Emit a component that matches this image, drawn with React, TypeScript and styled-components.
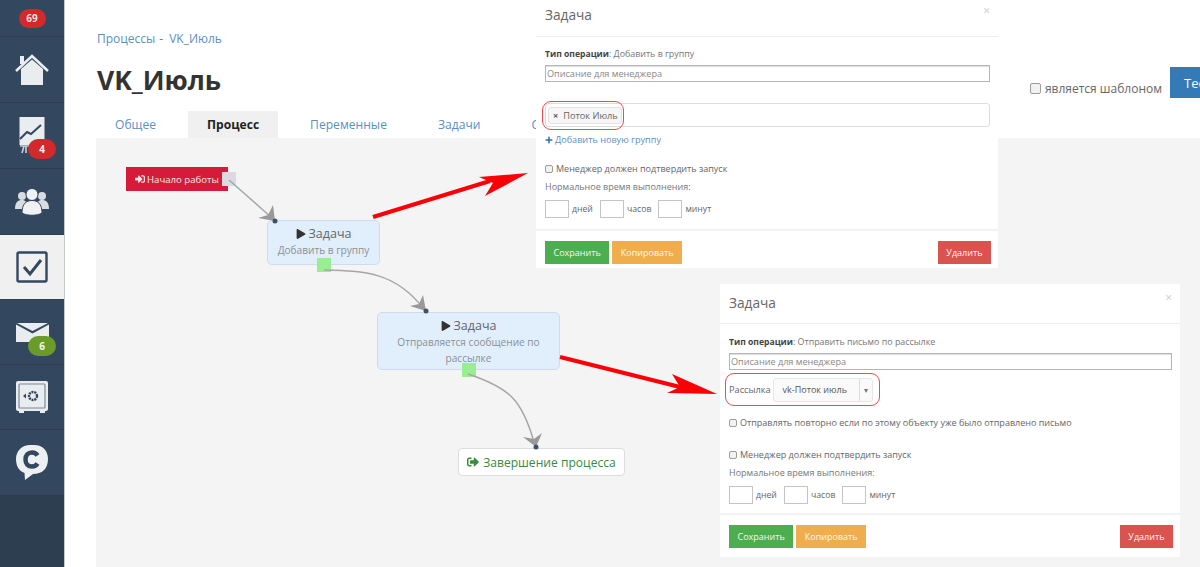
import React from 'react';
import styled, { createGlobalStyle } from 'styled-components';
import { FaSignInAlt, FaPlus, FaPlay, FaSignOutAlt } from 'react-icons/fa';

const GlobalStyle = createGlobalStyle`
  html, body {
    margin: 0;
    padding: 0;
    background: #fff;
    font-family: "Open Sans", "Liberation Sans", sans-serif;
    color: #666;
  }
  * {
    box-sizing: border-box;
  }
`;

const HomeIcon = () => (
  <svg width="34" height="32" viewBox="0 0 34 32">
    <rect x="5" y="2" width="4" height="8" fill="#e9edf0" />
    <path d="M1 17 L17 2 L33 17" fill="none" stroke="#e9edf0" strokeWidth="2.6" />
    <path d="M6 15 L17 5.5 L28 15 V31 H6 Z" fill="#e9edf0" />
  </svg>
);

const ChartIcon = () => (
  <svg width="26" height="37" viewBox="0 0 26 37">
    <rect x="0.5" y="0" width="25" height="28" fill="#e9edf0" />
    <path d="M1 22 L8 15 L12 17 L22 8" fill="none" stroke="#33475f" strokeWidth="2" />
    <path d="M1 29 H10 M5 29 L3 36 M7 29 V36" stroke="#c9d0d6" strokeWidth="1.6" fill="none" />
  </svg>
);

const UsersIcon = () => (
  <svg width="34" height="28" viewBox="0 0 34 28">
    <circle cx="7" cy="8" r="4" fill="#d8dde2" />
    <circle cx="27" cy="8" r="4" fill="#d8dde2" />
    <path d="M0 21 C0 14 3 12 7 12 C10 12 13 14 13 21 Z" fill="#d8dde2" />
    <path d="M21 21 C21 14 24 12 27 12 C31 12 34 14 34 21 Z" fill="#d8dde2" />
    <circle cx="17" cy="6.5" r="6" fill="#f0f2f4" stroke="#33475f" strokeWidth="1" />
    <path d="M7 25 C7 16 11 12.5 17 12.5 C23 12.5 27 16 27 25 C22 28 12 28 7 25 Z" fill="#f0f2f4" stroke="#33475f" strokeWidth="1" />
  </svg>
);

const TaskIcon = () => (
  <svg width="32" height="32" viewBox="0 0 32 32">
    <rect x="1.5" y="1.5" width="29" height="29" rx="1.5" fill="#f0f0f0" stroke="#33475f" strokeWidth="2.4" />
    <path d="M8 16 L14 23 L25 9" fill="none" stroke="#33475f" strokeWidth="3" />
  </svg>
);

const MailIcon = () => (
  <svg width="33" height="19" viewBox="0 0 33 19">
    <path d="M0 1.5 L16.5 10.5 L33 1.5 V19 H0 Z" fill="#e9edf0" />
    <path d="M1 0 H32 L16.5 8 Z" fill="#e9edf0" />
  </svg>
);

const SafeIcon = () => (
  <svg width="32" height="32" viewBox="0 0 32 32">
    <rect x="0" y="0" width="32" height="30" rx="2" fill="#e9edf0" />
    <rect x="3" y="3" width="26" height="24" rx="1" fill="none" stroke="#7b8a99" strokeWidth="1.2" />
    <circle cx="17" cy="15" r="4" fill="none" stroke="#33475f" strokeWidth="2.4" strokeDasharray="2 0.8" />
    <path d="M7 15 L10 12.5 V17.5 Z" fill="#33475f" />
    <rect x="3" y="30" width="5" height="2" fill="#e9edf0" />
    <rect x="24" y="30" width="5" height="2" fill="#e9edf0" />
  </svg>
);

const ChatIcon = () => (
  <svg width="32" height="36" viewBox="0 0 32 36">
    <path d="M14 0 H18 C27 0 32 6 32 14 C32 24 26 29 17 29 L9 35 L8.5 28 C3 26 0 21 0 14 C0 6 6 0 14 0 Z" fill="#edf0f2" />
    <path d="M21.5 10.5 C20 8 18 7.5 16 7.5 C12 7.5 9.5 10 9.5 14.5 C9.5 19 12 21.5 16 21.5 C18 21.5 20 21 21.5 18.5" fill="none" stroke="#33475f" strokeWidth="4.5" />
  </svg>
);

const NAV_ITEMS = [
  { height: 66, icon: <HomeIcon /> },
  { height: 66, icon: <ChartIcon />, badge: '4', color: '#d22a2a', offset: 9 },
  { height: 66, icon: <UsersIcon /> },
  { height: 65, icon: <TaskIcon />, active: true },
  { height: 65, icon: <MailIcon />, badge: '6', color: '#6b9c2a', offset: 8 },
  { height: 65, icon: <SafeIcon /> },
  { height: 66, icon: <ChatIcon /> },
];

const App = () => {
  return (
    <Page>
      <GlobalStyle />
      <Sidebar>
        <TopItem>
          <CountBadge>69</CountBadge>
        </TopItem>
        {NAV_ITEMS.map((item, index) => (
          <NavItem key={index} $height={item.height} $active={item.active}>
            {item.icon}
            {item.badge && (
              <NavBadge $color={item.color} $offset={item.offset}>
                {item.badge}
              </NavBadge>
            )}
          </NavItem>
        ))}
      </Sidebar>

      <Main>
        <Breadcrumbs>
          Процессы<span>-</span>VK_Июль
        </Breadcrumbs>
        <TitleRow>
          <Title>VK_Июль</Title>
          <TemplateLabel>
            <Check />
            является шаблоном
          </TemplateLabel>
          <TestButton>Тестировать</TestButton>
        </TitleRow>
        <Tabs>
          <Tab>Общее</Tab>
          <Tab $active>Процесс</Tab>
          <Tab>Переменные</Tab>
          <Tab>Задачи</Tab>
          <Tab>Статистика</Tab>
        </Tabs>
        <Canvas>
          <StartNode>
            <FaSignInAlt size={10} />
            Начало работы
            <StartHandle />
          </StartNode>

          <TaskNode $x={171} $y={82} $w={113} $h={45}>
            <TaskTitle>
              <FaPlay size={10} color="#333" />
              Задача
            </TaskTitle>
            <TaskText>Добавить в группу</TaskText>
            <TaskHandle />
          </TaskNode>

          <TaskNode $x={281} $y={174} $w={183} $h={58}>
            <TaskTitle>
              <FaPlay size={10} color="#333" />
              Задача
            </TaskTitle>
            <TaskText>Отправляется сообщение по рассылке</TaskText>
            <TaskHandle />
          </TaskNode>

          <EndNode>
            <FaSignOutAlt size={12} />
            Завершение процесса
          </EndNode>

          <Connectors width="1104" height="429" viewBox="96 138 1104 429">
            <path d="M229 180 L272 218" fill="none" stroke="#a6a6a6" strokeWidth="1.5" />
            <path d="M275 221 L258 218 L268 215 L273 205 Z" fill="#999" />
            <circle cx="275" cy="221" r="2.5" fill="#3d5269" />
            <path d="M324 270 C365 271 395 272 423 308" fill="none" stroke="#a6a6a6" strokeWidth="1.5" />
            <path d="M426 311 L410 306 L419 304 L423 295 Z" fill="#999" />
            <circle cx="426" cy="311" r="2.5" fill="#3d5269" />
            <path d="M468 374 C510 388 522 400 534 442" fill="none" stroke="#a6a6a6" strokeWidth="1.5" />
            <path d="M536 447 L523 437 L534 439 L542 433 Z" fill="#999" />
            <circle cx="536" cy="447" r="2.5" fill="#3d5269" />
          </Connectors>
        </Canvas>
      </Main>

      <Panel $x={536} $y={0} $w={462} $h={268}>
        <PanelHeader $height={37}>
          <PanelTitle $lift={8}>Задача</PanelTitle>
          <CloseMark $top={2}>×</CloseMark>
        </PanelHeader>
        <PanelBody>
          <OperationLine $mt={10}>
            <b>Тип операции</b>: Добавить в группу
          </OperationLine>
          <DescriptionInput>Описание для менеджера</DescriptionInput>
          <TagsField>
            <TagRing>
              <Tag>
                <TagCross>×</TagCross>Поток Июль
              </Tag>
            </TagRing>
          </TagsField>
          <AddLink>
            <FaPlus size={8} />
            Добавить новую группу
          </AddLink>
          <ConfirmLine $mt={16}>
            <Check $small />
            Менеджер должен подтвердить запуск
          </ConfirmLine>
          <TimeBlock />
        </PanelBody>
        <PanelFooter height={39} />
      </Panel>

      <Panel $x={720} $y={284} $w={460} $h={273}>
        <PanelHeader $height={40}>
          <PanelTitle $lift={2}>Задача</PanelTitle>
          <CloseMark $top={5}>×</CloseMark>
        </PanelHeader>
        <PanelBody>
          <OperationLine $mt={11}>
            <b>Тип операции</b>: Отправить письмо по рассылке
          </OperationLine>
          <DescriptionInput>Описание для менеджера</DescriptionInput>
          <MailingRing>
            Рассылка
            <MailingSelect>
              <MailingValue>vk-Поток июль</MailingValue>
              <MailingCaret>▾</MailingCaret>
            </MailingSelect>
          </MailingRing>
          <ConfirmLine $mt={10}>
            <Check $small />
            Отправлять повторно если по этому объекту уже было отправлено письмо
          </ConfirmLine>
          <ConfirmLine $mt={19}>
            <Check $small />
            Менеджер должен подтвердить запуск
          </ConfirmLine>
          <TimeBlock />
        </PanelBody>
        <PanelFooter height={44} />
      </Panel>

      <RedArrows width="1200" height="567" viewBox="0 0 1200 567">
        <path d="M373 217 L490 181" stroke="#fb0007" strokeWidth="4" fill="none" />
        <path d="M528 173 L479 177 L493 183 L485 196 Z" fill="#fb0007" />
        <path d="M560 357 L684 388" stroke="#fb0007" strokeWidth="4" fill="none" />
        <path d="M717 394 L672 374 L680 387 L667 393 Z" fill="#fb0007" />
      </RedArrows>
    </Page>
  );
};

const TimeBlock = () => (
  <>
    <TimeLabel>Нормальное время выполнения:</TimeLabel>
    <TimeRow>
      <TimeInput />
      <TimeUnit>дней</TimeUnit>
      <TimeInput />
      <TimeUnit>часов</TimeUnit>
      <TimeInput />
      <TimeUnit>минут</TimeUnit>
    </TimeRow>
  </>
);

const PanelFooter = ({ height }: { height: number }) => (
  <Footer $height={height}>
    <FooterButton $color="#4cae4f">Сохранить</FooterButton>
    <FooterButton $color="#f0ad4e">Копировать</FooterButton>
    <FooterButton $color="#d9534f" $right>
      Удалить
    </FooterButton>
  </Footer>
);

const Page = styled.div`
  position: relative;
  display: flex;
  width: 1200px;
  height: 567px;
  overflow: hidden;
  background: #fff;
`;

const Sidebar = styled.nav`
  flex: 0 0 65px;
  display: flex;
  flex-direction: column;
  background: #2c3e50;
  border-right: 1px solid #c4c9ce;
`;

const TopItem = styled.div`
  height: 37px;
  display: flex;
  align-items: center;
  justify-content: center;
  background: #33475f;
  border-bottom: 1px solid #2c3e50;
`;

const CountBadge = styled.span`
  width: 27px;
  height: 19px;
  border-radius: 10px;
  background: #d22a2a;
  color: #f3dede;
  font-size: 10px;
  font-weight: 700;
  line-height: 19px;
  text-align: center;
`;

const NavItem = styled.div<{ $height: number; $active?: boolean }>`
  position: relative;
  height: ${(p) => p.$height}px;
  display: flex;
  align-items: center;
  justify-content: center;
  background: ${(p) => (p.$active ? '#f0f0f0' : '#33475f')};
  border-bottom: 1px solid #2c3e50;
`;

const NavBadge = styled.span<{ $color?: string; $offset?: number }>`
  position: absolute;
  left: 28px;
  bottom: ${(p) => p.$offset}px;
  width: 28px;
  height: 20px;
  border-radius: 10px;
  background: ${(p) => p.$color};
  color: #f5f5f0;
  font-size: 10px;
  font-weight: 700;
  line-height: 20px;
  text-align: center;
`;

const Main = styled.main`
  flex: 1;
  min-width: 0;
  display: flex;
  flex-direction: column;
  padding: 31px 0 0 31px;
`;

const Breadcrumbs = styled.div`
  height: 16px;
  padding-left: 1px;
  font-size: 12px;
  line-height: 16px;
  color: #5b8fc4;
  span {
    margin: 0 6px 0 4px;
    color: #777;
  }
`;

const TitleRow = styled.div`
  display: flex;
  align-items: center;
  height: 31px;
  margin-top: 20px;
  padding-left: 1px;
`;

const Title = styled.h1`
  flex: 1;
  margin: 0 0 6px;
  font-size: 26.5px;
  font-weight: 700;
  color: #333;
`;

const Check = styled.span<{ $small?: boolean }>`
  flex: none;
  display: inline-block;
  width: ${(p) => (p.$small ? 8 : 11)}px;
  height: ${(p) => (p.$small ? 8 : 11)}px;
  border: 1px solid #9c9c9c;
  border-radius: 2px;
  background: #f2f2f2;
`;

const TemplateLabel = styled.label`
  display: flex;
  align-items: center;
  gap: 4px;
  padding-top: 12px;
  font-size: 12px;
  color: #666;
`;

const TestButton = styled.button`
  flex: none;
  width: 110px;
  height: 31px;
  margin-left: 8px;
  margin-right: -80px;
  padding: 0 14px;
  border: 0;
  background: #337ab7;
  color: #fff;
  font: inherit;
  font-size: 13px;
  text-align: left;
`;

const Tabs = styled.div`
  display: flex;
  gap: 13px;
  height: 27px;
  margin-top: 13px;
`;

const Tab = styled.div<{ $active?: boolean }>`
  padding: 0 19px;
  background: ${(p) => (p.$active ? '#f0f0f0' : 'transparent')};
  color: ${(p) => (p.$active ? '#222' : '#5b8fc4')};
  font-size: 12.1px;
  font-weight: ${(p) => (p.$active ? 700 : 400)};
  line-height: 27px;
`;

const Canvas = styled.section`
  position: relative;
  flex: 1;
  background: #f4f4f4;
`;

const Connectors = styled.svg`
  position: absolute;
  left: 0;
  top: 0;
  pointer-events: none;
`;

const StartNode = styled.div`
  position: absolute;
  left: 30px;
  top: 29px;
  display: flex;
  align-items: center;
  gap: 2px;
  width: 102px;
  height: 24px;
  padding-left: 9px;
  background: #d41c3a;
  color: #f8e6e9;
  font-size: 9.6px;
`;

const StartHandle = styled.span`
  position: absolute;
  right: -8px;
  top: 5px;
  width: 14px;
  height: 14px;
  background: #dcd9e3;
`;

const TaskNode = styled.div<{ $x: number; $y: number; $w: number; $h: number }>`
  position: absolute;
  left: ${(p) => p.$x}px;
  top: ${(p) => p.$y}px;
  width: ${(p) => p.$w}px;
  height: ${(p) => p.$h}px;
  padding: 5px 4px 0;
  border: 1px solid #cfdbe8;
  border-radius: 5px;
  background: #e1effd;
  text-align: center;
`;

const TaskTitle = styled.div`
  display: flex;
  align-items: center;
  justify-content: center;
  gap: 3px;
  font-size: 12.5px;
  line-height: 15px;
  color: #666;
`;

const TaskText = styled.div`
  margin-top: 2px;
  font-size: 10.1px;
  line-height: 15.5px;
  color: #8a8f98;
`;

const TaskHandle = styled.span`
  position: absolute;
  left: 50%;
  bottom: -8px;
  width: 14px;
  height: 14px;
  margin-left: -7px;
  background: #98ee90;
`;

const EndNode = styled.div`
  position: absolute;
  left: 362px;
  top: 310px;
  display: flex;
  align-items: center;
  justify-content: center;
  gap: 4px;
  width: 167px;
  height: 28px;
  border: 1px solid #ddd;
  border-radius: 4px;
  background: #fff;
  color: #3a8a3f;
  font-size: 12.1px;
`;

const Panel = styled.section<{ $x: number; $y: number; $w: number; $h: number }>`
  position: absolute;
  left: ${(p) => p.$x}px;
  top: ${(p) => p.$y}px;
  width: ${(p) => p.$w}px;
  height: ${(p) => p.$h}px;
  display: flex;
  flex-direction: column;
  background: #fff;
`;

const PanelHeader = styled.header<{ $height: number }>`
  flex: none;
  position: relative;
  display: flex;
  align-items: center;
  height: ${(p) => p.$height}px;
  padding: 0 8px 0 9px;
  border-bottom: 1px solid #eee;
`;

const PanelTitle = styled.h4<{ $lift: number }>`
  margin: 0 0 ${(p) => p.$lift}px;
  font-size: 13.7px;
  font-weight: 400;
  color: #666;
`;

const CloseMark = styled.span<{ $top: number }>`
  position: absolute;
  right: 8px;
  top: ${(p) => p.$top}px;
  font-size: 12px;
  color: #ccc;
`;

const PanelBody = styled.div`
  flex: 1;
  display: flex;
  flex-direction: column;
  align-items: flex-start;
  padding: 0 8px 0 9px;
`;

const OperationLine = styled.div<{ $mt: number }>`
  margin-top: ${(p) => p.$mt}px;
  font-size: 8.9px;
  line-height: 13px;
  color: #777;
  b {
    font-size: 8.6px;
    font-weight: 700;
    color: #444;
  }
`;

const DescriptionInput = styled.div`
  width: 100%;
  height: 17px;
  margin-top: 4px;
  padding-left: 1px;
  border: 1px solid #b5b5b5;
  box-shadow: inset 0 1px 1px #ddd;
  font-size: 9.1px;
  line-height: 15px;
  color: #888;
`;

const TagsField = styled.div`
  display: flex;
  align-items: center;
  width: 100%;
  height: 24px;
  margin-top: 21px;
  border: 1px solid #ddd;
  border-radius: 3px;
`;

const TagRing = styled.div`
  flex: none;
  display: flex;
  align-items: center;
  width: 82px;
  height: 29px;
  margin-left: -4px;
  padding-left: 5px;
  border: 1px solid #f0484f;
  border-radius: 9px;
`;

const Tag = styled.span`
  display: flex;
  align-items: center;
  height: 17px;
  padding: 0 3px 0 4px;
  border: 1px solid #e2e2e2;
  border-radius: 3px;
  background: #f6f6f6;
  font-size: 9.2px;
  color: #666;
`;

const TagCross = styled.span`
  margin-right: 5px;
  font-weight: 700;
  color: #555;
`;

const AddLink = styled.div`
  display: flex;
  align-items: center;
  gap: 2px;
  margin-top: 6px;
  font-size: 9.1px;
  line-height: 13px;
  color: #5b8fc4;
  svg {
    color: #2f6fb0;
  }
`;

const ConfirmLine = styled.label<{ $mt: number }>`
  display: flex;
  align-items: center;
  gap: 3px;
  margin-top: ${(p) => p.$mt}px;
  font-size: 9px;
  line-height: 13px;
  color: #666;
`;

const TimeLabel = styled.div`
  margin-top: 5px;
  font-size: 9px;
  line-height: 13px;
  color: #777;
`;

const TimeRow = styled.div`
  display: flex;
  align-items: center;
  margin-top: 7px;
`;

const TimeInput = styled.span`
  width: 24px;
  height: 18px;
  border: 1px solid #c4c4c4;
  background: #fff;
`;

const TimeUnit = styled.span`
  padding: 0 7px 0 3px;
  font-size: 8.7px;
  color: #666;
`;

const MailingRing = styled.div`
  display: flex;
  align-items: center;
  gap: 2px;
  width: 155px;
  height: 33px;
  margin: 3px 0 0 -4px;
  padding-left: 3px;
  border: 1px solid #f0484f;
  border-radius: 9px;
  font-size: 9.2px;
  color: #666;
`;

const MailingSelect = styled.div`
  display: flex;
  width: 100px;
  height: 24px;
  border: 1px solid #e6e6e6;
  border-radius: 3px;
  background: #fafafa;
`;

const MailingValue = styled.span`
  flex: 1;
  padding-left: 9px;
  font-size: 9px;
  line-height: 22px;
  color: #555;
`;

const MailingCaret = styled.span`
  width: 13px;
  border-left: 1px solid #ddd;
  font-size: 8px;
  line-height: 22px;
  text-align: center;
  color: #777;
`;

const Footer = styled.footer<{ $height: number }>`
  flex: none;
  display: flex;
  gap: 3px;
  height: ${(p) => p.$height}px;
  padding: 10px 7px 0 9px;
  border-top: 2px solid #f2f2f2;
`;

const FooterButton = styled.button<{ $color: string; $right?: boolean }>`
  height: 23px;
  margin-left: ${(p) => (p.$right ? 'auto' : '0')};
  padding: 0 8.5px;
  border: 0;
  background: ${(p) => p.$color};
  color: #f6f6f6;
  font: inherit;
  font-size: 9px;
`;

const RedArrows = styled.svg`
  position: absolute;
  left: 0;
  top: 0;
  pointer-events: none;
`;

export default App;
